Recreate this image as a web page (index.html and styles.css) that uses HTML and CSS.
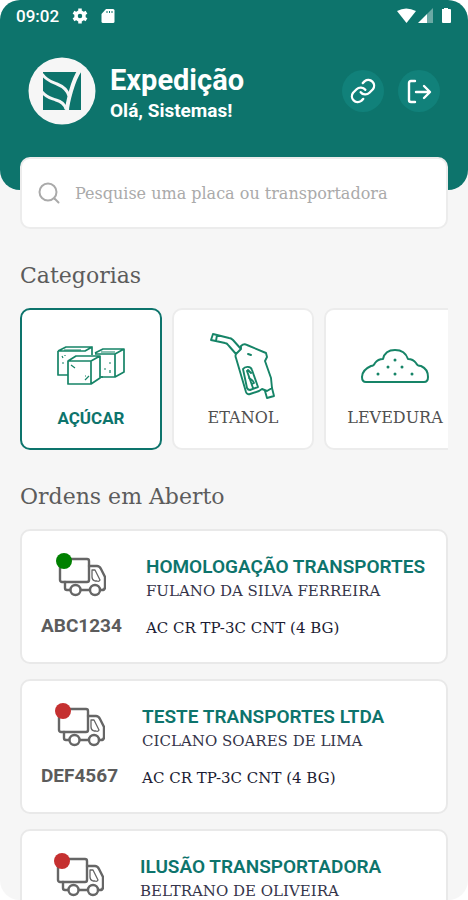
FILE: index.html
```html
<!DOCTYPE html>
<html lang="pt-BR">
<head>
<meta charset="utf-8">
<meta name="viewport" content="width=device-width, initial-scale=1">
<title>Expedição</title>
<link rel="stylesheet" href="styles.css">
</head>
<body>
<svg class="defs" aria-hidden="true">
  <symbol id="truck" viewBox="0 0 50 44">
    <g fill="none" stroke="#666" stroke-width="2.4" stroke-linejoin="round" stroke-linecap="round">
      <rect x="4" y="6" width="29" height="23" rx="2"/>
      <path d="M33 13h8c2 0 3 1 4 3l4 8v10q0 3-3 3h-2M9 29v6q0 2 2 2h3M25 37h8"/>
      <circle cx="19.500" cy="37" r="5"/><circle cx="39" cy="37" r="5"/>
      <path stroke-width="1.300" d="M36 17h3l5 10q-1 2-3 1h-2q-3-1-3-4z"/>
    </g>
  </symbol>
</svg>
<div class="app">
  <header class="header">
    <div class="status">
      <span>09:02</span>
      <svg width="16" height="16" viewBox="0 0 16 16" aria-hidden="true"><circle cx="8" cy="8" r="4" fill="none" stroke="#fff" stroke-width="3.500"/><g stroke="#fff" stroke-width="3.500"><path d="M8 .5v3M8 12.500v3M1.500 4.200l2.600 1.500M11.900 10.300l2.600 1.500M1.500 11.800l2.600-1.500M11.900 5.700l2.600-1.500"/></g></svg>
      <svg class="sd" width="14" height="16" viewBox="0 0 14 16" aria-hidden="true"><path fill="#fff" d="M5 1h7q1.500 0 1.500 1.500v11Q13.500 15 12 15H2Q.5 15 .5 13.500V6z"/><path stroke="#0d746c" d="M6 3v2M8.500 3v2M11 3v2"/></svg>
      <svg class="signal" width="55" height="18" viewBox="0 0 55 18" aria-hidden="true"><path fill="#fff" d="M0 4Q9-1 19 4L9.500 16z"/><path fill="#fff" d="M21 16l9-9v9z"/><path fill="#6ba9a4" d="M30 7l6-6v15h-6z"/><path fill="#fff" d="M45 2h2V1h4v1h2q1 0 1 1v12q0 1-1 1h-7q-1 0-1-1V3z"/></svg>
    </div>
    <div class="profile">
      <svg class="logo" viewBox="0 0 68 68" role="img" aria-label="Logotipo"><circle cx="34" cy="34" r="33.500" fill="#f6f6f6"/><path fill="#0d746c" d="M15 15h38v38H15z"/><g fill="none" stroke="#f6f6f6"><path stroke-width="3" d="M14 17c5 7 10 8 15 10q10 4 12 12"/><path stroke-width="3" d="M14 35c5 6 9 6 14 8q8 2 10 9"/><path stroke-width="4" d="M52 13Q47 20 43 34T39 54"/></g></svg>
      <div class="greeting"><h1>Expedição</h1><p>Olá, Sistemas!</p></div>
      <button class="round" type="button" aria-label="Conectar"><svg width="28" height="28" viewBox="0 0 24 24" fill="none" stroke="#fff" stroke-width="2" stroke-linecap="round" stroke-linejoin="round"><path d="M10 13a5 5 0 0 0 7.500.5l3-3a5 5 0 0 0-7-7l-1.700 1.700M14 11a5 5 0 0 0-7.500-.5l-3 3a5 5 0 0 0 7 7l1.700-1.700"/></svg></button>
      <button class="round" type="button" aria-label="Sair"><svg width="28" height="28" viewBox="0 0 28 28" fill="none" stroke="#fff" stroke-width="2.400" stroke-linecap="round" stroke-linejoin="round"><path d="M10 4H6Q4 4 4 6v17q0 2 2 2h4M11 15h13M19 9l6 6-6 6"/></svg></button>
    </div>
  </header>
  <main>
    <label class="search">
      <svg width="24" height="24" viewBox="0 0 24 24" fill="none" stroke="#aaa" stroke-width="2" stroke-linecap="round" aria-hidden="true"><circle cx="10" cy="11" r="8.500"/><path d="M16.500 17.500l4 4"/></svg>
      <input type="search" placeholder="Pesquise uma placa ou transportadora" aria-label="Pesquise uma placa ou transportadora">
    </label>
    <section>
      <h2>Categorias</h2>
      <div class="categories">
        <button class="category selected" type="button">
          <svg viewBox="0 0 70 70" fill="none" stroke="#168467" stroke-width="1.700" stroke-linejoin="round" aria-hidden="true">
            <path d="M2 19h22M2 19v24h10M2 19l8-4h26l-7 4H15M29 19l7-4v8M39 21l8-4h21l-9 5H39M59 22v23l9-5V17M59 45H45"/>
            <path d="M12 29h23v23H12zM12 29l8-5h24l-9 5M44 24v22l-9 6M44 45h3"/>
            <path stroke-width="1.200" d="M8 18h17M45 20h14M6 24l1 2M9 23v1M6 31h2M15 33l4 3M29 48l4-4M29 44h1M53 31h2M48 37h2M54 38v3"/>
          </svg><span>AÇÚCAR</span>
        </button>
        <button class="category" type="button">
          <svg viewBox="0 0 70 70" fill="none" stroke="#168467" stroke-width="1.900" stroke-linejoin="round" stroke-linecap="round" aria-hidden="true">
            <path d="M5 2l16 4q2 0 4 2l8 9M3 8l14 3q2 0 4 3l7 8M5 2L3 8M9 3L8 9M33 17l-5 5q-1 2 0 4l10 34q1 3 4 2l9-3 3-2 5 2 5-3-1-10-6-17 2-4-1-4-19-8q-3-2-6 1z"/>
            <path d="M35 37c2-3 8-3 9 1l6 17-8 3q-2 0-3-2zM39 39l6 17M41 46q4 2 5 5l-2 1M40 38l3 3M40 22l3 1"/>
            <path d="M57 59l2 7 7-2-2-8"/>
          </svg><span>ETANOL</span>
        </button>
        <button class="category" type="button">
          <svg viewBox="0 0 70 70" fill="none" stroke="#168467" stroke-width="2" stroke-linejoin="round" aria-hidden="true"><path d="M6 50q-4 0-4-5 0-7 9-11 3 0 4-3 3-4 8-4 2-9 12-9t13 9q5 0 8 4 1 3 5 3 7 3 7 11 0 5-4 5z"/><g fill="#168467" stroke="none"><circle cx="35" cy="28" r="1.500"/><circle cx="28" cy="35" r="1.500"/><circle cx="42" cy="35" r="1.500"/><circle cx="18" cy="42" r="1.500"/><circle cx="35" cy="42" r="1.500"/><circle cx="52" cy="42" r="1.500"/></g></svg><span>LEVEDURA</span>
        </button>
      </div>
    </section>
    <section>
      <h2>Ordens em Aberto</h2>
      <div class="orders">
        <article class="order">
          <div class="vehicle"><div class="truck"><svg width="50" height="44" aria-hidden="true"><use href="#truck"/></svg><i class="dot ready"></i></div><b>ABC1234</b></div>
          <div class="info"><h3>HOMOLOGAÇÃO TRANSPORTES</h3><p>FULANO DA SILVA FERREIRA</p><p class="load">AC CR TP-3C CNT (4 BG)</p></div>
        </article>
        <article class="order">
          <div class="vehicle"><div class="truck"><svg width="50" height="44" aria-hidden="true"><use href="#truck"/></svg><i class="dot"></i></div><b>DEF4567</b></div>
          <div class="info"><h3>TESTE TRANSPORTES LTDA</h3><p>CICLANO SOARES DE LIMA</p><p class="load">AC CR TP-3C CNT (4 BG)</p></div>
        </article>
        <article class="order">
          <div class="vehicle"><div class="truck"><svg width="50" height="44" aria-hidden="true"><use href="#truck"/></svg><i class="dot"></i></div></div>
          <div class="info"><h3>ILUSÃO TRANSPORTADORA</h3><p>BELTRANO DE OLIVEIRA</p></div>
        </article>
      </div>
    </section>
  </main>
</div>
</body>
</html>
```
FILE: styles.css
```css
* { box-sizing: border-box; }
body {
  margin: 0;
  background: #fff;
  font-family: Roboto, sans-serif;
  --slab: "Roboto Slab", "DejaVu Serif", serif;
}
h1, h2, h3, p { margin: 0; }
button { font: inherit; cursor: pointer; }
.defs { position: absolute; width: 0; height: 0; }
.app {
  height: 100vh;
  overflow: hidden auto;
  scrollbar-width: none;
  border-radius: 20px;
  background: #f6f6f6;
}
.header {
  padding-bottom: 65px;
  border-radius: 0 0 20px 20px;
  background: #0d746c;
  color: #fff;
}
.status {
  display: flex;
  align-items: center;
  height: 32px;
  padding: 0 16px;
  gap: 13px;
  font-size: 17px;
  font-weight: 500;
}
.signal { margin-left: auto; }
.profile {
  display: flex;
  align-items: center;
  padding: 25px 28px 0;
  gap: 14px;
}
.logo { width: 68px; height: 68px; flex: none; }
.greeting { flex: 1; padding-top: 6px; }
.greeting h1 { font-size: 29px; line-height: 34px; font-weight: 700; }
.greeting p { font-size: 19px; line-height: 28px; font-weight: 700; }
.round {
  display: grid;
  place-items: center;
  width: 42px;
  height: 42px;
  padding: 0;
  border: 0;
  border-radius: 50%;
  background: #11817a;
}
main { padding: 0 20px 20px; }
.search {
  display: flex;
  align-items: center;
  gap: 13px;
  height: 72px;
  margin-top: -33px;
  padding: 0 16px;
  position: relative;
  border: 2px solid #ececec;
  border-radius: 10px;
  background: #fff;
}
.search input {
  flex: 1;
  min-width: 0;
  padding: 0;
  border: 0;
  outline: 0;
  background: none;
  font: 16px var(--slab);
}
.search input::placeholder { color: #aaa; opacity: 1; }
h2 {
  padding: 29px 0 14px;
  color: #5c5c5c;
  font: 22px/36px var(--slab);
}
.categories {
  display: flex;
  gap: 10px;
  overflow: auto hidden;
  scrollbar-width: none;
}
.category {
  display: flex;
  flex: 0 0 142px;
  flex-direction: column;
  align-items: center;
  gap: 4px;
  height: 142px;
  padding: 22px 0 0;
  border: 2px solid #ececec;
  border-radius: 10px;
  background: #fff;
  color: #505050;
  font: 16px/24px var(--slab);
}
.category svg { width: 70px; height: 70px; }
.category.selected {
  border-color: #0d746c;
  color: #0d746c;
  font: 700 17px/24px Roboto, sans-serif;
}
.orders { display: grid; gap: 15px; }
.order {
  display: flex;
  align-items: flex-start;
  gap: 24px;
  height: 135px;
  padding: 22px 19px 0;
  border: 2px solid #e9e9e9;
  border-radius: 10px;
  background: #fff;
  white-space: nowrap;
}
.vehicle { display: grid; justify-items: center; gap: 17px; min-width: 75px; }
.vehicle b { color: #5c5c5c; font-size: 19px; line-height: 24px; font-weight: 700; }
.truck { position: relative; height: 44px; }
.dot {
  position: absolute;
  left: 0;
  top: 0;
  width: 16px;
  height: 16px;
  border-radius: 50%;
  background: #c53030;
}
.dot.ready { background: #008000; }
.info h3 { color: #0d746c; font-size: 19px; line-height: 28px; font-weight: 600; }
.info p { color: #35354a; font: 15px/20px var(--slab); }
.info .load { margin-top: 17px; color: #1c1c33; }
```
